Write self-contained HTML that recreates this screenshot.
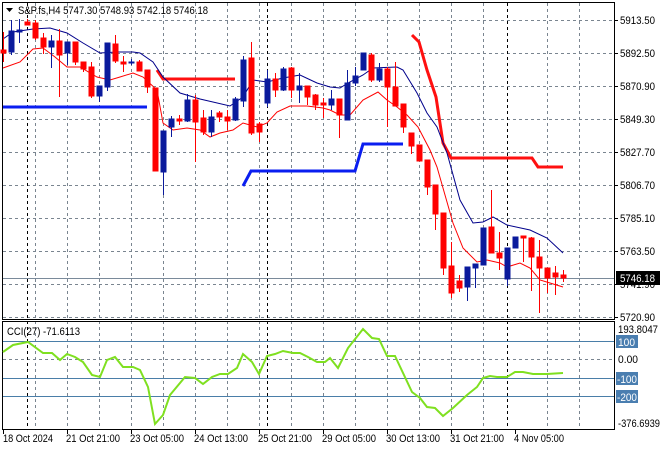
<!DOCTYPE html>
<html><head><meta charset="utf-8"><style>
html,body{margin:0;padding:0;background:#fff;}
svg{display:block;font-family:"Liberation Sans",sans-serif;}
</style></head><body>
<svg width="660" height="450" viewBox="0 0 660 450" xmlns="http://www.w3.org/2000/svg">
<rect width="660" height="450" fill="#fff"/>
<g stroke="#7a8590" stroke-width="1" stroke-dasharray="3,3" fill="none">
<path d="M3 20.5H614M3 53.5H614M3 86.5H614M3 119.5H614M3 152.5H614M3 185.5H614M3 218.5H614M3 251.5H614M3 284.5H614M3 317.5H614"/>
<path d="M3 359.5H614"/>
<path d="M35.5 3V430M67.5 3V430M99.5 3V430M131.5 3V430M163.5 3V430M195.5 3V430M227.5 3V430M259.5 3V430M291.5 3V430M323.5 3V430M355.5 3V430M387.5 3V430M419.5 3V430M451.5 3V430M483.5 3V430M547.5 3V430M579.5 3V430"/>
</g>
<g stroke="#000" stroke-width="1" stroke-dasharray="3,3">
<path d="M27.5 3V430M267.5 3V430M507.5 3V430"/>
</g>
<g stroke="#4a7ea8" stroke-width="1">
<path d="M3 341.5H614M3 378.5H614M3 396.5H614"/>
</g>
<path d="M3 278.5H614" stroke="#7a8a9a" stroke-width="1"/>
<g stroke="#000" stroke-width="1" fill="none">
<rect x="2.5" y="2.5" width="612" height="317"/>
<rect x="2.5" y="321.5" width="612" height="108"/>
</g>
<g fill="none" stroke-width="3">
<path d="M3 107H147" stroke="#0a1ef0"/>
<path d="M243 186L251 171H355L363 144H403" stroke="#0a1ef0"/>
<path d="M157 70L163 79H235" stroke="#ff1010"/>
<path d="M412 35L419 42L427 70L436 97L443 143L451 158H532L538 167H563" stroke="#ff1010"/>
</g>
<polyline fill="none" stroke="#00008b" stroke-width="1" points="3,39 13,32 33,29 50,28 67,33 83,43 100,53 117,52 133,52 140,53 153,62 163,77 180,93 200,99 230,106 243,97 253,80 267,82 283,78 300,75 317,83 330,87 340,88 348,83 363,75 373,68 397,67 403,70 417,93 427,113 437,127 447,153 460,200 473,223 483,222 493,217 507,225 530,230 547,238 563,253"/>
<polyline fill="none" stroke="#ff0000" stroke-width="1" points="3,68 20,62 33,49 43,48 55,57 67,67 80,67 97,77 110,80 120,77 133,73 143,77 157,90 163,123 173,130 187,128 200,130 210,137 220,133 233,130 243,123 257,127 267,123 277,112 290,106 307,106 323,108 330,110 340,115 350,115 363,100 378,92 387,100 397,107 407,115 418,127 430,150 437,167 453,223 463,248 477,262 487,260 500,263 507,267 520,263 530,268 540,280 550,283 563,287"/>
<g stroke-width="1">
<g stroke="#f00" fill="#f00">
<path d="M3.5 32V62M27.5 19V25M35.5 20V40M43.5 33V54M59.5 29V97M75.5 42V65M83.5 62V72M91.5 62V98M115.5 35V63M123.5 56V72M139.5 60V71M147.5 70V93M155.5 88V171M179.5 115V125M195.5 95V162M203.5 110V135M219.5 111V122M227.5 110V130M251.5 42V135M259.5 122V142M275.5 73V97M291.5 67V98M307.5 86V105M315.5 94V110M323.5 98V118M339.5 99V138M371.5 53V82M387.5 67V127M395.5 62V106M403.5 104V133M411.5 133V154M419.5 145V161M427.5 160V195M435.5 185V230M443.5 213V275M451.5 242V298M459.5 275V292M491.5 190V253M499.5 232V270M523.5 237V262M531.5 237V291M539.5 240V313M547.5 268V293M555.5 266V295M563.5 270V282"/>
<rect x="1" y="50" width="5" height="3"/><rect x="25" y="22" width="5" height="3"/><rect x="33" y="23" width="5" height="15"/><rect x="41" y="38" width="5" height="9"/><rect x="57" y="41" width="5" height="14"/><rect x="73" y="42" width="5" height="20"/><rect x="81" y="62" width="5" height="7"/><rect x="89" y="67" width="5" height="29"/><rect x="113" y="44" width="5" height="17"/><rect x="121" y="62" width="5" height="2"/><rect x="137" y="62" width="5" height="9"/><rect x="145" y="70" width="5" height="17"/><rect x="153" y="88" width="5" height="83"/><rect x="177" y="119" width="5" height="2"/><rect x="193" y="100" width="5" height="22"/><rect x="201" y="118" width="5" height="14"/><rect x="217" y="113" width="5" height="4"/><rect x="225" y="117" width="5" height="4"/><rect x="249" y="58" width="5" height="75"/><rect x="257" y="124" width="5" height="8"/><rect x="273" y="79" width="5" height="11"/><rect x="289" y="68" width="5" height="22"/><rect x="305" y="86" width="5" height="11"/><rect x="313" y="95" width="5" height="10"/><rect x="321" y="103" width="5" height="2"/><rect x="337" y="99" width="5" height="16"/><rect x="369" y="55" width="5" height="25"/><rect x="385" y="69" width="5" height="18"/><rect x="393" y="87" width="5" height="19"/><rect x="401" y="104" width="5" height="23"/><rect x="409" y="133" width="5" height="13"/><rect x="417" y="145" width="5" height="16"/><rect x="425" y="160" width="5" height="27"/><rect x="433" y="185" width="5" height="29"/><rect x="441" y="213" width="5" height="55"/><rect x="449" y="266" width="5" height="27"/><rect x="457" y="281" width="5" height="7"/><rect x="489" y="227" width="5" height="26"/><rect x="497" y="253" width="5" height="5"/><rect x="521" y="236" width="5" height="2"/><rect x="529" y="238" width="5" height="19"/><rect x="537" y="257" width="5" height="11"/><rect x="545" y="268" width="5" height="10"/><rect x="553" y="273" width="5" height="4"/><rect x="561" y="275" width="5" height="3"/>
</g>
<g stroke="#0a1a9c" fill="#0a1a9c">
<path d="M11.5 20V55M19.5 19V43M51.5 35V68M67.5 42V65M99.5 86V102M107.5 43V91M131.5 59V65M163.5 131V195M171.5 116V137M187.5 94V122M211.5 110V137M235.5 97V121M243.5 56V107M267.5 70V107M283.5 67V91M299.5 73V103M331.5 90V110M347.5 70V120M355.5 67V86M363.5 53V70M379.5 63V82M467.5 267V301M475.5 264V288M483.5 228V265M507.5 248V286M515.5 237V248"/>
<rect x="9" y="31" width="5" height="21"/><rect x="17" y="30" width="5" height="2"/><rect x="49" y="41" width="5" height="6"/><rect x="65" y="42" width="5" height="11"/><rect x="97" y="86" width="5" height="10"/><rect x="105" y="43" width="5" height="44"/><rect x="129" y="62" width="5" height="1"/><rect x="161" y="131" width="5" height="41"/><rect x="169" y="119" width="5" height="8"/><rect x="185" y="100" width="5" height="21"/><rect x="209" y="117" width="5" height="15"/><rect x="233" y="99" width="5" height="21"/><rect x="241" y="60" width="5" height="41"/><rect x="265" y="79" width="5" height="24"/><rect x="281" y="69" width="5" height="21"/><rect x="297" y="86" width="5" height="4"/><rect x="329" y="99" width="5" height="6"/><rect x="345" y="83" width="5" height="37"/><rect x="353" y="76" width="5" height="7"/><rect x="361" y="53" width="5" height="17"/><rect x="377" y="69" width="5" height="11"/><rect x="465" y="267" width="5" height="20"/><rect x="473" y="264" width="5" height="4"/><rect x="481" y="228" width="5" height="37"/><rect x="505" y="248" width="5" height="31"/><rect x="513" y="237" width="5" height="11"/>
</g>
</g>
<polyline fill="none" stroke="#7fe020" stroke-width="2" points="3,352 13,345 28,342 43,353 52,353 60,360 67,354 75,357 83,362 92,375 100,377 107,360 115,357 123,367 133,367 140,370 148,387 155,424 163,415 170,395 185,377 195,378 203,384 212,377 220,374 228,374 237,368 243,354 252,362 259,374 267,356 275,354 283,351 293,353 300,353 308,357 317,362 325,362 330,358 338,368 348,348 363,329 372,338 379,339 387,356 395,356 412,392 420,398 427,407 435,408 443,416 453,408 467,395 477,387 483,378 490,376 497,377 507,377 515,372 523,372 533,374 547,374 563,373"/>
<path d="M6 8H13L9.5 12Z" fill="#000"/>
<g font-size="11" fill="#000" lengthAdjust="spacingAndGlyphs">
<text x="18" y="14" textLength="190" lengthAdjust="spacingAndGlyphs">S&amp;P.fs,H4  5747.30 5748.93 5742.18 5746.18</text>
<text x="7" y="335" textLength="73" lengthAdjust="spacingAndGlyphs">CCI(27) -71.6113</text>
</g>
<g font-size="11" fill="#000">
<path d="M614 20.5h4M614 53.5h4M614 86.5h4M614 119.5h4M614 152.5h4M614 185.5h4M614 218.5h4M614 251.5h4M614 284.5h4M614 317.5h4" stroke="#000"/>
<text x="620" y="24" textLength="35" lengthAdjust="spacingAndGlyphs">5913.50</text>
<text x="620" y="57" textLength="35" lengthAdjust="spacingAndGlyphs">5892.50</text>
<text x="620" y="90" textLength="35" lengthAdjust="spacingAndGlyphs">5870.90</text>
<text x="620" y="123" textLength="35" lengthAdjust="spacingAndGlyphs">5849.30</text>
<text x="620" y="156" textLength="35" lengthAdjust="spacingAndGlyphs">5827.70</text>
<text x="620" y="189" textLength="35" lengthAdjust="spacingAndGlyphs">5806.70</text>
<text x="620" y="222" textLength="35" lengthAdjust="spacingAndGlyphs">5785.10</text>
<text x="620" y="255" textLength="35" lengthAdjust="spacingAndGlyphs">5763.50</text>
<text x="620" y="288" textLength="35" lengthAdjust="spacingAndGlyphs">5741.90</text>
<text x="620" y="321" textLength="35" lengthAdjust="spacingAndGlyphs">5720.90</text>
<rect x="616" y="271" width="44" height="14" fill="#000"/>
<text x="620" y="282" fill="#fff" textLength="35" lengthAdjust="spacingAndGlyphs">5746.18</text>
<text x="618" y="333" textLength="40" lengthAdjust="spacingAndGlyphs">193.8047</text>
<rect x="616" y="335" width="22" height="13" fill="#4a7eb0"/>
<text x="618" y="346" fill="#fff" textLength="17" lengthAdjust="spacingAndGlyphs">100</text>
<text x="618" y="363" textLength="20" lengthAdjust="spacingAndGlyphs">0.00</text>
<rect x="616" y="372" width="22" height="13" fill="#4a7eb0"/>
<text x="617" y="383" fill="#fff" textLength="20" lengthAdjust="spacingAndGlyphs">-100</text>
<rect x="616" y="390" width="22" height="13" fill="#4a7eb0"/>
<text x="617" y="401" fill="#fff" textLength="20" lengthAdjust="spacingAndGlyphs">-200</text>
<text x="618" y="427" textLength="42" lengthAdjust="spacingAndGlyphs">-376.6939</text>
</g>
<g font-size="11" fill="#000">
<path d="M3.5 430v4M67.5 430v4M131.5 430v4M195.5 430v4M259.5 430v4M323.5 430v4M387.5 430v4M451.5 430v4M515.5 430v4" stroke="#000"/>
<text x="3" y="442" textLength="50" lengthAdjust="spacingAndGlyphs">18 Oct 2024</text>
<text x="66" y="442" textLength="54" lengthAdjust="spacingAndGlyphs">21 Oct 21:00</text>
<text x="130" y="442" textLength="54" lengthAdjust="spacingAndGlyphs">23 Oct 05:00</text>
<text x="194" y="442" textLength="54" lengthAdjust="spacingAndGlyphs">24 Oct 13:00</text>
<text x="258" y="442" textLength="54" lengthAdjust="spacingAndGlyphs">25 Oct 21:00</text>
<text x="322" y="442" textLength="54" lengthAdjust="spacingAndGlyphs">29 Oct 05:00</text>
<text x="386" y="442" textLength="54" lengthAdjust="spacingAndGlyphs">30 Oct 13:00</text>
<text x="450" y="442" textLength="54" lengthAdjust="spacingAndGlyphs">31 Oct 21:00</text>
<text x="514" y="442" textLength="50" lengthAdjust="spacingAndGlyphs">4 Nov 05:00</text>
</g>
</svg>
</body></html>
